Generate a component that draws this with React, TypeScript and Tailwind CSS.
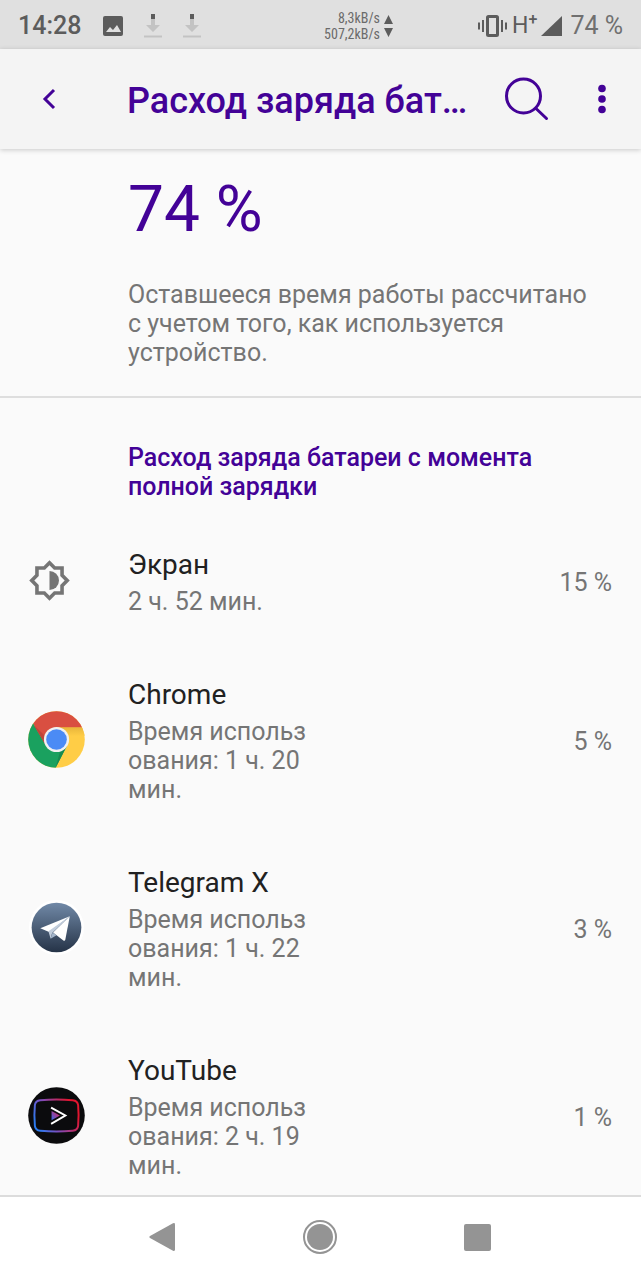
import type { ReactNode } from 'react';

function ImageIcon() {
  return (
    <svg viewBox="0 0 20 20" className="w-5 h-5" aria-hidden="true">
      <rect width="20" height="20" rx="2" fill="#5c5c5c" />
      <path d="M3 16l4-5 3 3 4-5 4 7z" fill="#e0e0e0" />
    </svg>
  );
}

function DownloadIcon() {
  return (
    <svg viewBox="0 0 18 24" className="w-[18px] h-6" aria-hidden="true">
      <path d="M7 5h4v6h5l-7 7-7-7h5zM0 21.500h18v2H0z" fill="#c3c3c3" />
      <rect x="7" width="4" height="5" fill="#5c5c5c" />
    </svg>
  );
}

function StatusBar() {
  return (
    <div className="h-[49px] shrink-0 bg-[#e0e0e0] text-[#5c5c5c] flex items-center justify-between px-[18px] pt-0.5">
      <div className="flex items-center">
        <span className="text-[25px] leading-[29px] font-medium w-[85px]">14:28</span>
        <ImageIcon />
        <div className="flex gap-[21px] ml-[21px]">
          <DownloadIcon />
          <DownloadIcon />
        </div>
      </div>
      <div className="flex items-center gap-1 ml-[38px]">
        <div className="text-[14px] leading-4 text-right font-['Roboto_Condensed',Roboto,sans-serif] text-[#6a6a6a]">
          <div>8,3kB/s</div>
          <div>507,2kB/s</div>
        </div>
        <svg viewBox="0 0 9 22" className="w-[9px] h-[22px]" aria-hidden="true">
          <path d="M4.500 0L9 9H0zM0 13h9l-4.500 9z" fill="#5c5c5c" />
        </svg>
      </div>
      <div className="flex items-center">
        <svg viewBox="0 0 30 22" className="w-[30px] h-[22px]" fill="none" stroke="#5c5c5c" aria-hidden="true">
          <rect x="9.500" y="1.500" width="10" height="19" rx="1" strokeWidth="3" />
          <path d="M1 7.500v7M28 7.500v7" strokeWidth="2" />
          <path d="M5 5v12M24 5v12" strokeWidth="2" />
        </svg>
        <span className="text-[23px] leading-[29px] ml-1">
          H<sup className="text-base font-medium">+</sup>
        </span>
        <svg viewBox="0 0 21 20" className="w-[21px] h-5 ml-1" aria-hidden="true">
          <path d="M21 0v20H0z" fill="#5c5c5c" />
        </svg>
        <span className="text-[25px] leading-[29px] ml-2 text-[#707070]">74 %</span>
      </div>
    </div>
  );
}

function Header() {
  return (
    <header className="h-[100px] shrink-0 bg-[#f4f4f4] text-[#430297] flex items-center pl-9 pr-[22px] shadow-[0_1px_5px_rgba(0,0,0,0.2)] relative z-10">
      <button aria-label="Назад" className="w-7 h-10 mr-[63px] flex items-center justify-center">
        <svg viewBox="0 0 28 40" className="w-7 h-10" fill="none" stroke="currentColor" strokeWidth="3" aria-hidden="true">
          <path d="M18 11L9 20l9 9" />
        </svg>
      </button>
      <h1 className="flex-1 min-w-0 pt-1 whitespace-nowrap text-[36px] leading-[44px] font-medium">Расход заряда бат…</h1>
      <button aria-label="Поиск" className="w-[46px] h-11 shrink-0">
        <svg viewBox="0 0 46 44" className="w-[46px] h-11" fill="none" stroke="currentColor" strokeWidth="3" strokeLinecap="round" aria-hidden="true">
          <circle cx="20.500" cy="19" r="17" />
          <path d="M33 31.500L43.500 41.500" />
        </svg>
      </button>
      <button aria-label="Ещё" className="ml-9 w-[34px] h-10 shrink-0">
        <svg viewBox="0 0 34 40" className="w-[34px] h-10" fill="currentColor" aria-hidden="true">
          <circle cx="17" cy="9.500" r="3.800" />
          <circle cx="17" cy="20" r="3.800" />
          <circle cx="17" cy="30.500" r="3.800" />
        </svg>
      </button>
    </header>
  );
}

function BrightnessIcon() {
  return (
    <svg viewBox="0 0 24 24" className="w-[43px] h-[43px]" fill="#757575" aria-hidden="true">
      <path d="M20 15.310L23.310 12 20 8.690V4h-4.690L12 .690 8.690 4H4v4.690L.690 12 4 15.310V20h4.690L12 23.310 15.310 20H20v-4.690zM18 14.480V18h-3.520L12 20.480 9.520 18H6v-3.520L3.520 12 6 9.520V6h3.520L12 3.520 14.480 6H18v3.520L20.480 12 18 14.480z" />
      <path d="M12 6.700v10.600a5.300 5.300 0 0 0 0-10.600z" />
    </svg>
  );
}

function ChromeIcon() {
  return (
    <svg viewBox="0 0 58 58" className="w-[57px] h-[57px]" aria-hidden="true">
      <defs>
        <clipPath id="chrome-disc">
          <circle cx="29" cy="29" r="28.800" />
        </clipPath>
        <linearGradient id="chrome-shade" x1="0" y1="0" x2="0" y2="1">
          <stop offset="0" stopColor="#e8b53a" />
          <stop offset="1" stopColor="#ffcd46" />
        </linearGradient>
      </defs>
      <g clipPath="url(#chrome-disc)">
        <rect width="58" height="58" fill="#ffcd46" />
        <path d="M29 16.500h29v9H29z" fill="url(#chrome-shade)" />
        <path d="M0 0h58v16.500H29L18 35.500 5.500 13z" fill="#d94f41" />
        <path d="M5.500 13L0 10v48h28L39.800 35.200 29 41.500 18.200 35.200z" fill="#1aa15f" />
        <path d="M5.500 14L18.200 35.200 19 27z" fill="#c0453a" />
        <path d="M28 58l11.800-22.800-7 5.300z" fill="#178a51" />
      </g>
      <circle cx="29" cy="29" r="12.800" fill="#f1f1f1" />
      <circle cx="29" cy="29" r="10.500" fill="#4b8bf5" />
    </svg>
  );
}

function TelegramIcon() {
  return (
    <svg viewBox="0 0 58 58" className="w-[57px] h-[57px]" aria-hidden="true">
      <defs>
        <linearGradient id="tg-bg" x1="0" y1="0" x2="0" y2="1">
          <stop offset="0" stopColor="#7189a7" />
          <stop offset="1" stopColor="#253347" />
        </linearGradient>
      </defs>
      <circle cx="29" cy="29" r="28" fill="#fff" />
      <circle cx="29" cy="29" r="25.300" fill="url(#tg-bg)" />
      <path d="M12.500 29.800L42.500 17.500 21.500 33.500z" fill="#fff" />
      <path d="M20.800 32.800L42.500 17.500 24.500 34.500 23 40.500z" fill="#c2cedd" />
      <path d="M25 34L23 40.500 29 37z" fill="#a4b6cc" />
      <path d="M42.500 17.500L25.500 34 36 42.200q1.600.800 2-1z" fill="#fff" />
    </svg>
  );
}

function YouTubeIcon() {
  return (
    <svg viewBox="0 0 58 58" className="w-[57px] h-[57px]" fill="none" aria-hidden="true">
      <defs>
        <linearGradient id="yt-frame" x1="0" y1="0.700" x2="1" y2="0.300">
          <stop offset="0" stopColor="#2b7bf0" />
          <stop offset="0.350" stopColor="#7b4fc0" />
          <stop offset="0.900" stopColor="#e0152f" />
        </linearGradient>
        <linearGradient id="yt-play" x1="0" y1="1" x2="1" y2="0">
          <stop offset="0" stopColor="#3568ec" />
          <stop offset="1" stopColor="#f0204f" />
        </linearGradient>
      </defs>
      <circle cx="29" cy="29" r="28.800" fill="#0b0b0d" />
      <path
        d="M12.500 13.500Q29 12 45.500 13.500 50.500 14 51 18.500 52 29 51 39.500 50.500 44 45.500 44.500 29 46 12.500 44.500 7.500 44 7 39.500 6 29 7 18.500 7.500 14 12.500 13.500z"
        stroke="url(#yt-frame)"
        strokeWidth="2"
      />
      <path d="M24 24.500L32.500 29 24 33.800z" fill="url(#yt-play)" />
      <path d="M23.500 21L38 29 23.500 37.500" stroke="#fff" strokeWidth="2" />
    </svg>
  );
}

type Usage = { name: string; time: string; percent: string; icon: ReactNode };

const usage: Usage[] = [
  { name: 'Экран', time: '2 ч. 52 мин.', percent: '15 %', icon: <BrightnessIcon /> },
  { name: 'Chrome', time: 'Время использования: 1 ч. 20 мин.', percent: '5 %', icon: <ChromeIcon /> },
  { name: 'Telegram X', time: 'Время использования: 1 ч. 22 мин.', percent: '3 %', icon: <TelegramIcon /> },
  { name: 'YouTube', time: 'Время использования: 2 ч. 19 мин.', percent: '1 %', icon: <YouTubeIcon /> },
];

function UsageRow({ name, time, percent, icon }: Usage) {
  return (
    <li className="flex items-center pl-7 pr-[29px] py-[31px]">
      <div className="w-[100px] shrink-0 pb-1">{icon}</div>
      <div className="flex-1">
        <h3 className="text-[28px] leading-[33px] text-[#212121]">{name}</h3>
        <p className="mt-1.5 w-[180px] break-all text-[25px] leading-[29px] text-[#757575]">{time}</p>
      </div>
      <span className="text-[25px] leading-[29px] text-[#757575]">{percent}</span>
    </li>
  );
}

function NavBar() {
  return (
    <nav className="h-[85px] shrink-0 bg-white border-t-2 border-[#dcdcdc] flex items-center justify-center gap-[121px] pr-0.5 pb-[3px] text-[#949494]">
      <button aria-label="Назад">
        <svg viewBox="0 0 36 36" className="w-9 h-9" fill="currentColor" aria-hidden="true">
          <path d="M5 17L28 4.200q2-.900 2 1.200v25.200q0 2.100-2 1.200L5 19q-1.600-1 0-2z" />
        </svg>
      </button>
      <button aria-label="Домой">
        <svg viewBox="0 0 36 36" className="w-9 h-9" aria-hidden="true">
          <circle cx="18" cy="18" r="16" fill="none" stroke="currentColor" strokeWidth="2" />
          <circle cx="18" cy="18" r="13" fill="currentColor" />
        </svg>
      </button>
      <button aria-label="Недавние">
        <svg viewBox="0 0 36 36" className="w-9 h-9" fill="currentColor" aria-hidden="true">
          <rect x="5" y="5" width="27" height="27" rx="2" />
        </svg>
      </button>
    </nav>
  );
}

function App() {
  return (
    <div className="h-screen flex flex-col bg-[#fafafa] font-[Roboto,sans-serif]">
      <StatusBar />
      <Header />
      <main className="flex-1 min-h-0 overflow-y-auto [scrollbar-width:none]">
        <section className="pl-32 pr-12 pt-[23px] pb-[29px] border-b-2 border-[#dedede]">
          <div className="text-[64px] leading-[75px] text-[#430297]">74 %</div>
          <p className="mt-[33px] text-[25px] leading-[29px] text-[#757575]">
            Оставшееся время работы рассчитано с учетом того, как используется устройство.
          </p>
        </section>
        <section>
          <h2 className="pl-32 pr-8 pt-[45px] pb-4 text-[25px] leading-[29px] font-medium text-[#430297]">
            Расход заряда батареи с момента полной зарядки
          </h2>
          <ul>
            {usage.map((item) => (
              <UsageRow key={item.name} {...item} />
            ))}
          </ul>
        </section>
      </main>
      <NavBar />
    </div>
  );
}

export default App;
